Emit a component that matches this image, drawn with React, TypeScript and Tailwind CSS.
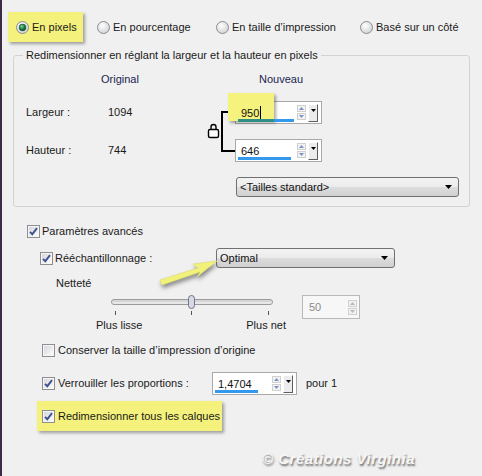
import React from "react"

function Radio({ checked }: { checked?: boolean }) {
  return (
    <svg width="13" height="13" viewBox="0 0 13 13" className="shrink-0">
      <defs>
        <radialGradient id="rb" cx="40%" cy="35%" r="70%">
          <stop offset="0" stopColor="#ffffff" />
          <stop offset="1" stopColor="#cfd1d4" />
        </radialGradient>
        <radialGradient id="rg" cx="40%" cy="35%" r="65%">
          <stop offset="0" stopColor="#7fe0a0" />
          <stop offset="0.5" stopColor="#1f8a4c" />
          <stop offset="1" stopColor="#0b4a27" />
        </radialGradient>
      </defs>
      <circle cx="6.5" cy="6.5" r="6" fill="url(#rb)" stroke="#8a8c8e" />
      {checked && <circle cx="6.5" cy="6.5" r="3.4" fill="url(#rg)" stroke="#2a4a38" strokeWidth="0.6" />}
    </svg>
  )
}

function Check({ checked }: { checked?: boolean }) {
  return (
    <svg width="13" height="13" viewBox="0 0 13 13" className="shrink-0">
      <defs>
        <linearGradient id="cb" x1="0" y1="0" x2="1" y2="1">
          <stop offset="0" stopColor="#d6d8dc" />
          <stop offset="1" stopColor="#fbfbfb" />
        </linearGradient>
      </defs>
      <rect x="0.5" y="0.5" width="12" height="12" fill="#f6f6f6" stroke="#8e8f91" />
      <rect x="2" y="2" width="9" height="9" fill="url(#cb)" />
      {checked && <path d="M3 6.8 L5.3 9.2 L10 3.2" fill="none" stroke="#3f5291" strokeWidth="1.9" />}
    </svg>
  )
}

function Arrow({ color = "#000" }: { color?: string }) {
  return (
    <svg width="7" height="4" viewBox="0 0 7 4">
      <path d="M0 0 H7 L3.5 4 Z" fill={color} />
    </svg>
  )
}

function SpinButtons({ disabled }: { disabled?: boolean }) {
  const c = disabled ? "#b8b8b8" : "#7d93c4"
  return (
    <div className="flex flex-col gap-[1px] w-[9px] shrink-0">
      <div className="h-[7px] border border-[#d0d0d0] bg-[#f2f2f2] flex items-center justify-center">
        <svg width="5" height="3" viewBox="0 0 5 3"><path d="M0 3 H5 L2.5 0 Z" fill={c} /></svg>
      </div>
      <div className="h-[7px] border border-[#d0d0d0] bg-[#f2f2f2] flex items-center justify-center">
        <svg width="5" height="3" viewBox="0 0 5 3"><path d="M0 0 H5 L2.5 3 Z" fill={c} /></svg>
      </div>
    </div>
  )
}

function DropBtn() {
  return (
    <div className="w-[10px] h-[18px] shrink-0 bg-[#ececec] border-l border-t border-l-white border-t-white border-r border-b border-r-[#5e5e5e] border-b-[#5e5e5e] flex items-start justify-center pt-[4px]">
      <svg width="5" height="3" viewBox="0 0 5 3"><path d="M0 0 H5 L2.5 3 Z" fill="#000" /></svg>
    </div>
  )
}

function SpinInput({ value, width, line, highlight }: { value: string; width: string; line: string; highlight?: boolean }) {
  return (
    <div className={`relative ${width} h-[23px] border border-[#a9a9a9] bg-white flex items-center pr-[3px]`}>
      {highlight && (
        <div className="absolute left-[-8px] top-[-9px] w-[46px] h-[28px] bg-[#f5f27e] shadow-[2px_2px_3px_rgba(0,0,0,0.35)]" />
      )}
      <div className="relative flex-1 pl-[5px] leading-[14px] text-[#111]">
        {value}
        {highlight && <span className="inline-block w-[1px] h-[14px] bg-black align-[-3px] ml-[1px]" />}
      </div>
      <div
        className={`absolute left-[2px] bottom-[1px] h-[3px] ${line} ${
          highlight ? "bg-[linear-gradient(to_right,#2f8f86_0_36px,#3399ee_36px)]" : "bg-[#3399ee]"
        }`}
      />
      <div className="flex items-center gap-[2px]">
        <SpinButtons />
        <DropBtn />
      </div>
    </div>
  )
}

function Combo({ label, width }: { label: string; width: string }) {
  return (
    <div className={`${width} h-[20px] rounded-[3px] border border-[#707070] bg-[linear-gradient(#f3f3f3_0%,#ebebeb_50%,#dddddd_51%,#d0d0d0_100%)] flex items-center justify-between pl-[3px] pr-[6px]`}>
      <span className="leading-[14px] text-[#111]">{label}</span>
      <Arrow />
    </div>
  )
}

export default function App() {
  return (
    <div className="relative w-[482px] h-[476px] overflow-hidden bg-[#f0f0f0] border-l-2 border-[#3b2c45] font-['Liberation_Sans',Arial,sans-serif] text-[11px] text-[#1a1a1a]">
      {/* mode radios */}
      <div className="flex items-center pt-[12px] pl-[6px]">
        <div className="w-[75px] h-[30px] bg-[#f4f17c] shadow-[2px_2px_3px_rgba(0,0,0,0.35)] flex items-center gap-[3px] pl-[8px]">
          <Radio checked />
          <span>En pixels</span>
        </div>
        <div className="ml-[14px] w-[119px] flex items-center gap-[3px]">
          <Radio />
          <span>En pourcentage</span>
        </div>
        <div className="w-[144px] flex items-center gap-[3px]">
          <Radio />
          <span>En taille d’impression</span>
        </div>
        <div className="flex items-center gap-[3px]">
          <Radio />
          <span>Basé sur un côté</span>
        </div>
      </div>

      {/* pixel size group */}
      <fieldset className="mt-[6px] ml-[11px] w-[457px] border border-[#d3d3d3] rounded-[3px] pb-[9px] pl-[12px]">
        <legend className="ml-[-3px] px-[3px] leading-[14px]">
          Redimensionner en réglant la largeur et la hauteur en pixels
        </legend>
        <div className="mt-[10px] flex leading-[14px] text-[#1b2450]">
          <div className="w-[75px]" />
          <div className="w-[158px]">Original</div>
          <div>Nouveau</div>
        </div>
        <div className="mt-[15px] flex">
          <div className="w-[82px] flex flex-col gap-[15px]">
            <div className="h-[23px] flex items-center">Largeur :</div>
            <div className="h-[23px] flex items-center">Hauteur :</div>
          </div>
          <div className="w-[97px] flex flex-col gap-[15px]">
            <div className="h-[23px] flex items-center">1094</div>
            <div className="h-[23px] flex items-center">744</div>
          </div>
          <svg width="30" height="61" viewBox="0 0 30 61" className="shrink-0">
            <path d="M6 28 V26 A2.5 2.5 0 0 1 11 26 V28" fill="none" stroke="#000" strokeWidth="1.4" />
            <rect x="3.5" y="28.5" width="10" height="8" rx="1.5" fill="#fff" stroke="#000" strokeWidth="1.4" />
            <path d="M30 11 H17 V50 H30" fill="none" stroke="#000" strokeWidth="2" />
          </svg>
          <div className="flex flex-col gap-[15px]">
            <SpinInput value="950" width="w-[87px]" line="w-[56px]" highlight />
            <SpinInput value="646" width="w-[87px]" line="w-[53px]" />
          </div>
        </div>
        <div className="mt-[15px] ml-[210px]">
          <Combo label="<Tailles standard>" width="w-[223px]" />
        </div>
      </fieldset>

      {/* advanced */}
      <div className="mt-[17px] ml-[25px] h-[14px] flex items-center gap-[2px]">
        <Check checked />
        <span>Paramètres avancés</span>
      </div>
      <div className="mt-[10px] ml-[38px] h-[20px] flex items-center">
        <div className="w-[176px] flex items-center gap-[2px]">
          <Check checked />
          <span>Rééchantillonnage :</span>
        </div>
        <Combo label="Optimal" width="w-[179px]" />
      </div>
      <div className="mt-[8px] ml-[54px] leading-[14px]">Netteté</div>
      <div className="mt-[5px] ml-[94px] flex">
        <div className="w-[206px]">
          <svg width="195" height="21" viewBox="0 0 195 21">
            <rect x="15.5" y="4.5" width="161" height="5" rx="2.5" fill="#e7e7e7" stroke="#9a9a9a" />
            <line x1="17" y1="6" x2="175" y2="6" stroke="#c4c4c4" strokeWidth="1" />
            <rect x="92.5" y="0.5" width="6" height="13" rx="3" fill="#d7d9e6" stroke="#6f7280" />
            <line x1="19.5" y1="16" x2="19.5" y2="20" stroke="#555" />
            <line x1="95.5" y1="16" x2="95.5" y2="20" stroke="#555" />
            <line x1="172.5" y1="16" x2="172.5" y2="20" stroke="#555" />
          </svg>
          <div className="mt-[2px] w-[190px] flex justify-between leading-[14px]">
            <span>Plus lisse</span>
            <span>Plus net</span>
          </div>
        </div>
        <div className="w-[58px] h-[24px] border border-[#b9b9b9] bg-[#f7f7f7] flex items-center pr-[2px]">
          <span className="flex-1 pl-[6px] text-[#8a8a8a]">50</span>
          <SpinButtons disabled />
        </div>
      </div>

      <div className="mt-[11px] ml-[40px] h-[14px] flex items-center gap-[3px]">
        <Check />
        <span>Conserver la taille d’impression d’origine</span>
      </div>
      <div className="mt-[15px] ml-[40px] h-[23px] flex items-center">
        <div className="w-[170px] flex items-center gap-[3px]">
          <Check checked />
          <span>Verrouiller les proportions :</span>
        </div>
        <SpinInput value="1,4704" width="w-[85px]" line="w-[43px]" />
        <span className="ml-[9px]">pour 1</span>
      </div>
      <div className="mt-[6px] ml-[35px] w-[185px] h-[30px] bg-[#f4f17c] shadow-[2px_2px_3px_rgba(0,0,0,0.35)] flex items-center gap-[3px] pl-[5px]">
        <Check checked />
        <span>Redimensionner tous les calques</span>
      </div>

      <div className="mt-[19px] ml-[260px] text-[15px] font-bold italic leading-[18px] tracking-[0.5px] text-[#f6f6f6] [text-shadow:1px_2px_2px_#6e6e6e]">
        © Créations Virginia
      </div>

      {/* pointer arrow */}
      <svg
        width="66"
        height="38"
        viewBox="0 0 66 38"
        className="absolute left-[153px] top-[252px] drop-shadow-[1px_3px_2px_rgba(0,0,0,0.45)]"
      >
        <path d="M62 9 L38 12 L43 16 L5 28 L7 33 L45 20 L42 25 Z" fill="#f2f27a" stroke="#d8d860" strokeWidth="0.5" />
      </svg>
    </div>
  )
}
